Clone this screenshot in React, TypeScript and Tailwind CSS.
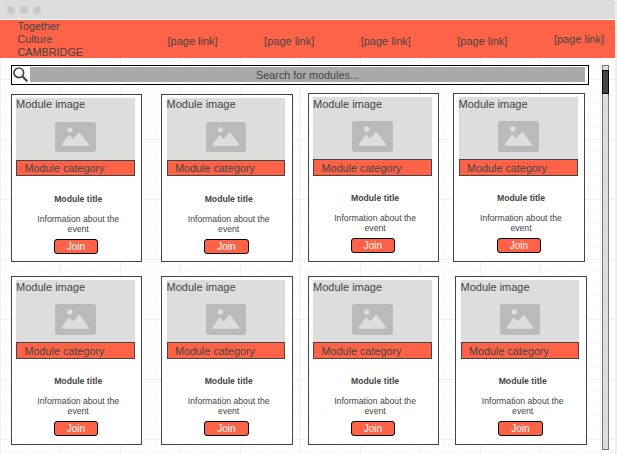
import React from "react";

type CardProps = {
  card: string;
  image: string;
  label: string;
  picture: string;
  category: string;
  text: string;
  button: string;
};

const short = {
  imageText: "pt-0",
  category: "h-[16px] pt-[1px]",
  body: "pt-[18px]",
  picture: "h-[30px]",
};
const tall = {
  imageText: "pt-px",
  category: "h-[17px] pt-[2px]",
  body: "pt-[17px]",
  picture: "h-[31px]",
};

const rows: { className: string; cards: (CardProps & { size: typeof short })[] }[] = [
  {
    className: "mt-[8px] h-[169px]",
    cards: [
      { size: short, card: "ml-[11px] mt-px w-[131px] h-[168px] pl-[4px]", image: "w-[119px]", label: "ml-0", picture: "w-[41px] ml-[39px]", category: "w-[119px] pl-[7.4px]", text: "ml-[2.2px] w-[120px]", button: "w-[44px] ml-[38px]" },
      { size: short, card: "ml-[19px] mt-px w-[132px] h-[168px] pl-[5px]", image: "w-[118px]", label: "-ml-[0.5px]", picture: "w-[40px] ml-[39px]", category: "w-[118px] pl-[6.9px]", text: "ml-[1.7px] w-[120px]", button: "w-[45px] ml-[37px]" },
      { size: tall, card: "ml-[15px] w-[131px] h-[169px] pl-[4px]", image: "w-[119px]", label: "ml-0", picture: "w-[41px] ml-[39px]", category: "w-[119px] pl-[7.4px]", text: "ml-[2.1px] w-[120px]", button: "w-[44px] ml-[38px]" },
      { size: tall, card: "ml-[14px] w-[132px] h-[169px] pl-[5px]", image: "w-[119px]", label: "-ml-[0.5px]", picture: "w-[41px] ml-[39px]", category: "w-[119px] pl-[6.9px]", text: "ml-[2px] w-[120px]", button: "w-[44px] ml-[38px]" },
    ],
  },
  {
    className: "mt-[14px] h-[169px]",
    cards: [
      { size: tall, card: "ml-[11px] w-[131px] h-[169px] pl-[4px]", image: "w-[119px]", label: "ml-0", picture: "w-[41px] ml-[39px]", category: "w-[119px] pl-[7.4px]", text: "ml-[2.2px] w-[120px]", button: "w-[44px] ml-[38px]" },
      { size: tall, card: "ml-[19px] w-[132px] h-[169px] pl-[5px]", image: "w-[118px]", label: "-ml-[0.5px]", picture: "w-[40px] ml-[39px]", category: "w-[118px] pl-[6.9px]", text: "ml-[1.7px] w-[120px]", button: "w-[45px] ml-[37px]" },
      { size: tall, card: "ml-[15px] w-[131px] h-[169px] pl-[4px]", image: "w-[119px]", label: "ml-0", picture: "w-[41px] ml-[39px]", category: "w-[119px] pl-[7.4px]", text: "ml-[2.1px] w-[120px]", button: "w-[44px] ml-[38px]" },
      { size: tall, card: "ml-[16px] w-[132px] h-[169px] pl-[5px]", image: "w-[118px]", label: "-ml-[0.5px]", picture: "w-[40px] ml-[39px]", category: "w-[118px] pl-[6.9px]", text: "ml-[1.7px] w-[120px]", button: "w-[45px] ml-[37px]" },
    ],
  },
];

function Picture({ className }: { className: string }) {
  return (
    <svg className={`block ${className}`} viewBox="0 0 41 31" preserveAspectRatio="none">
      <rect width="41" height="31" rx="3" fill="#bababa" />
      <circle cx="14.8" cy="8" r="2.7" fill="#ddd" />
      <path
        d="M7 22.7 L13.6 14 Q14.2 13.2 14.8 14 L18 17.5 L23.6 11.3 Q24.3 10.6 25 11.3 L33.8 22.9 Q34.4 24.7 33 24.7 L8 24.7 Q6.4 24.7 7 22.7 Z"
        fill="#ddd"
      />
    </svg>
  );
}

function ModuleCard({ size, card, image, label, picture, category, text, button }: CardProps & { size: typeof short }) {
  return (
    <article className={`shrink-0 border border-[#444] bg-white pt-[3px] ${card}`}>
      <div className={`flex h-[62px] flex-col bg-[#ddd] ${image}`}>
        <div className={`h-[24px] text-[11px] leading-[13px] whitespace-nowrap ${label} ${size.imageText}`}>Module image</div>
        <Picture className={`${picture} ${size.picture} shrink-0`} />
      </div>
      <div className={`border border-[#444] bg-[#ff6347] text-[10.84px] leading-[13px] whitespace-nowrap ${category} ${size.category}`}>
        Module category
      </div>
      <div className={size.body}>
        <div className={`text-center text-[8.67px] leading-[10px] ${text}`}>
          <h2 className="font-bold">Module title</h2>
          <p className="mt-[10px]">
            Information about the
            <br />
            event
          </p>
        </div>
        <button className={`mt-[5px] flex h-[15px] justify-center rounded-[3px] border border-black bg-[#ff6347] text-[10px] leading-[13px] text-white ${button}`}>
          Join
        </button>
      </div>
    </article>
  );
}

export default function App() {
  return (
    <div className="h-[454px] w-[617px] overflow-hidden bg-[#eeeeee] font-['Liberation_Sans',Arial,sans-serif] text-[#444]">
      <div className="flex h-full w-[615px] flex-col bg-white">
        <div className="flex h-[19px] shrink-0 items-center gap-[5px] rounded-t-[3px] bg-[#ddd] pl-[7px]">
          <i className="size-[8px] rounded-full bg-[#c9c9c9]" />
          <i className="size-[8px] rounded-full bg-[#c9c9c9]" />
          <i className="size-[8px] rounded-full bg-[#c9c9c9]" />
        </div>
        <header className="mt-px flex h-[38px] shrink-0 bg-[#ff6347] text-[11px] leading-[13px]">
          <div className="w-[149.5px] pl-[17.5px] text-[10.84px]">
            Together
            <br />
            Culture
            <br />
            CAMBRIDGE
          </div>
          <nav className="flex whitespace-nowrap pl-[18px] pt-[15px]">
            <a className="w-[96.6px]">[page link]</a>
            <a className="w-[96.6px]">[page link]</a>
            <a className="w-[96.6px]">[page link]</a>
            <a className="w-[96.6px]">[page link]</a>
            <a className="-mt-[2px]">[page link]</a>
          </nav>
        </header>
        <div className="flex min-h-0 flex-1 bg-[linear-gradient(to_right,#f0f0f0_1px,transparent_1px),linear-gradient(to_bottom,#f0f0f0_1px,transparent_1px),linear-gradient(to_right,#f9f9f9_1px,transparent_1px),linear-gradient(to_bottom,#f9f9f9_1px,transparent_1px)] bg-[size:60px_60px,60px_60px,12px_12px,12px_12px] bg-[position:0_21px,0_21px,0_9px,0_9px]">
          <main className="w-[602px] pt-[7px]">
            <div className="ml-[11px] flex h-[20px] w-[578px] border border-black bg-white">
              <svg className="mt-px ml-px block h-[16px] w-[17px]" viewBox="0 0 17 16">
                <circle cx="5.8" cy="5.8" r="4.8" fill="none" stroke="#444" strokeWidth="1.7" />
                <path d="M9.3 9.3 L14.3 14.2" stroke="#444" strokeWidth="2.2" />
              </svg>
              <div className="mt-px h-[15px] w-[555px] bg-[#a9a9a9] text-center text-[10.84px] leading-[16px]">Search for modules...</div>
            </div>
            {rows.map((row, r) => (
              <div key={r} className={`flex ${row.className}`}>
                {row.cards.map((c, i) => (
                  <ModuleCard key={i} {...c} />
                ))}
              </div>
            ))}
          </main>
          <div className="mt-[7px] h-[385px] w-[7px] border border-[#777] bg-[#ddd] pt-[4px]">
            <div className="-mx-px h-[24px] w-[7px] border border-black bg-[#444]" />
          </div>
        </div>
      </div>
    </div>
  );
}
